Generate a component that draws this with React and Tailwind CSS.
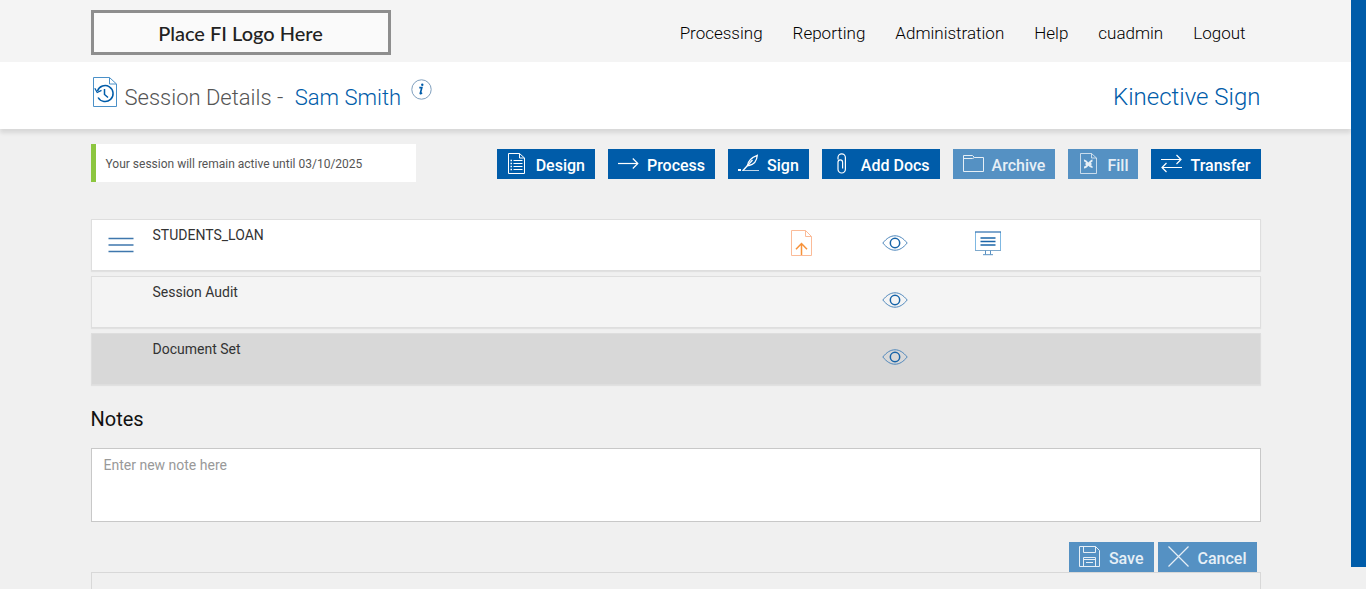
const iconProps = {
  fill: 'none',
  stroke: 'currentColor',
  'aria-hidden': true,
};

function HistoryDocIcon() {
  return (
    <svg width="24" height="30" viewBox="0 0 24 30" {...iconProps} className="shrink-0 text-[#4a90c8]">
      <path d="M.5.5h16l7 6.500v22.500H.5z" />
      <path d="M16.500.5V7h7" />
      <g stroke="#005ca9" strokeWidth="1.500">
        <path d="M4.500 14a8 8 0 1 1 .6 6.500" />
        <path d="M1.800 11.300l2.400 4.200 4.300-2.200" strokeWidth="1.300" />
        <path d="M11.500 12v5.500l3.500 3" />
      </g>
    </svg>
  );
}

function InfoIcon() {
  return (
    <svg width="21" height="21" viewBox="0 0 21 21" {...iconProps}>
      <circle cx="10.500" cy="10.500" r="9.700" stroke="#7f9fbd" />
      <path d="M8.300 8.700h2.500l-1.500 5.600c-.1.700.7.400 1.700-.6" stroke="#005ca9" strokeWidth="1.700" />
      <circle cx="11.300" cy="5.800" r="1.200" fill="#005ca9" stroke="none" />
    </svg>
  );
}

function DesignIcon() {
  return (
    <svg width="21" height="21" viewBox="0 0 21 21" {...iconProps}>
      <path d="M1.500.5h11l5 4.500v15.500h-16z" />
      <path d="M12.500.5V5h5" />
      <path d="M6.500 7.500h9M6.500 10.500h9M6.500 13.500h9M6.500 16.500h9" />
      <path d="M3.500 7.500H5M3.500 10.500H5M3.500 13.500H5M3.500 16.500H5" strokeWidth="1.600" />
    </svg>
  );
}

function ProcessIcon() {
  return (
    <svg width="21" height="21" viewBox="0 0 21 21" {...iconProps}>
      <path d="M0 10.500h20" strokeWidth="1.200" />
      <path d="M14.800 5.500l5 5-5 5" strokeWidth="1.200" />
    </svg>
  );
}

function SignIcon() {
  return (
    <svg width="21" height="21" viewBox="0 0 21 21" {...iconProps}>
      <path d="M4 17.500h17" strokeOpacity=".75" />
      <path d="M0 17h3" strokeWidth="2" />
      <path d="M9.500 12.500c.5-4.500 4-8 9.800-10.200-.5 6-3.800 9.400-8.300 10.200z" strokeWidth="1.300" />
      <path d="M5 17.500L14.500 7" strokeWidth="1.300" />
    </svg>
  );
}

function ClipIcon() {
  return (
    <svg width="21" height="21" viewBox="0 0 21 21" {...iconProps}>
      <path
        d="M6 6.500V4.500a3.700 3.700 0 0 1 7.400 0v11.800a3.700 3.700 0 0 1-7.400 0V9.200a2.300 2.300 0 0 1 4.600 0v6.300"
        strokeWidth="1.200"
      />
    </svg>
  );
}

function FolderIcon() {
  return (
    <svg width="21" height="21" viewBox="0 0 21 21" {...iconProps}>
      <path d="M.5 18.500v-16h9l2 2h9v14z" />
      <path d="M.5 5.500h9l2-1" />
    </svg>
  );
}

function FillIcon() {
  return (
    <svg width="21" height="21" viewBox="0 0 21 21" {...iconProps}>
      <path d="M2.500.5h11l5 4.500v15.500h-16z" strokeOpacity=".8" />
      <path d="M13.500.5V5h5" strokeOpacity=".8" />
      <path d="M6 7.500c3.500-.5 4.500 7 8.500 6.500M14.500 7.500c-3 0-4.500 7-8.500 7M7.500 11h6" strokeWidth="1.900" />
    </svg>
  );
}

function TransferIcon() {
  return (
    <svg width="21" height="21" viewBox="0 0 21 21" {...iconProps} strokeWidth="1.200">
      <path d="M0 6.500h20M15.500 2l4.500 4.500-4.500 4.500" />
      <path d="M21 14.500H1M5.500 10L1 14.500 5.500 19" />
    </svg>
  );
}

function SaveIcon() {
  return (
    <svg width="21" height="21" viewBox="0 0 21 21" {...iconProps}>
      <path d="M.5.5h16l4 4v16H.5z" />
      <path d="M4.500.5v6h12v-6" />
      <path d="M4.500 20.500v-9h12v9M4.500 13.500h12M7 16.500h7" />
    </svg>
  );
}

function CancelIcon() {
  return (
    <svg width="21" height="21" viewBox="0 0 21 21" {...iconProps} strokeWidth="1.200">
      <path d="M.5.500l20 20M20.500.500l-20 20" />
    </svg>
  );
}

function MenuIcon() {
  return (
    <svg width="26" height="16" viewBox="0 0 26 16" {...iconProps}>
      <path d="M.5 1.500h25M.5 8h25M.5 14.500h25" stroke="#3f77ad" strokeWidth="1.400" />
    </svg>
  );
}

function UploadIcon() {
  return (
    <svg width="22" height="26" viewBox="0 0 22 26" {...iconProps}>
      <path d="M.5.500h14l6 6v19H.5z" stroke="#fbbb98" />
      <path d="M14.500.5v6h6" stroke="#fbbb98" />
      <path d="M10.500 25V13.500M5 19.300l5.500-5.800 5.500 5.800" stroke="#f7923a" strokeWidth="1.500" />
    </svg>
  );
}

function EyeIcon() {
  return (
    <svg width="26" height="16" viewBox="0 0 26 16" {...iconProps}>
      <path
        d="M.8 8C4.800 3.200 8.500.8 13 .8S21.200 3.200 25.200 8c-4 4.800-7.700 7.200-12.200 7.200S4.800 12.800.8 8z"
        stroke="#4d86bb"
      />
      <circle cx="13" cy="8" r="4.700" stroke="#1663a8" strokeWidth="1.500" />
    </svg>
  );
}

function MonitorIcon() {
  return (
    <svg width="26" height="25" viewBox="0 0 26 25" {...iconProps}>
      <path d="M.5 19.500V1M25.500 1v18.500" stroke="#7fb8e2" />
      <path d="M0 1h26" stroke="#3a77b3" strokeWidth="1.300" />
      <path d="M0 19.500h26" stroke="#7fa9cc" />
      <path d="M5.500 7h15M5.500 10.500h15M5.500 14h15" stroke="#1b65a8" strokeWidth="1.400" />
      <path d="M10.500 19.500v4M15.500 19.500v4M8 23.700h10" stroke="#5b92c2" />
    </svg>
  );
}

const navItems = ['Processing', 'Reporting', 'Administration', 'Help', 'cuadmin', 'Logout'];

const actions = [
  { label: 'Design', Icon: DesignIcon },
  { label: 'Process', Icon: ProcessIcon },
  { label: 'Sign', Icon: SignIcon },
  { label: 'Add Docs', Icon: ClipIcon },
  { label: 'Archive', Icon: FolderIcon, disabled: true },
  { label: 'Fill', Icon: FillIcon, disabled: true },
  { label: 'Transfer', Icon: TransferIcon },
];

const documents = [
  { name: 'STUDENTS_LOAN', tone: 'bg-white', full: true },
  { name: 'Session Audit', tone: 'bg-[#f4f4f4]' },
  { name: 'Document Set', tone: 'bg-[#d8d8d8]' },
];

function ActionButton({ label, Icon, disabled, spacing = 'gap-2' }) {
  return (
    <button
      type="button"
      disabled={disabled}
      className={`flex h-[30px] items-start bg-[#005ca9] px-[10px] pt-1 text-base font-medium text-white disabled:bg-[#5591c3] disabled:text-[#e6eff6] ${spacing}`}
    >
      <Icon />
      <span className="pt-px leading-6">{label}</span>
    </button>
  );
}

function DocumentRow({ name, tone, full }) {
  return (
    <li
      className={`grid h-[52px] grid-cols-[58px_minmax(0,1fr)_93px_93px_93px_225px] items-center border border-[#dedede] shadow-[0_1px_1px_rgba(0,0,0,0.06)] ${tone}`}
    >
      <div className="flex justify-center">
        {full && (
          <button type="button" aria-label="Menu">
            <MenuIcon />
          </button>
        )}
      </div>
      <span className="self-start pt-[5px] pl-[3px] text-sm leading-5 text-[#333]">{name}</span>
      <div className="flex justify-center pb-1">
        {full && (
          <button type="button" aria-label="Upload">
            <UploadIcon />
          </button>
        )}
      </div>
      <div className="flex justify-center pb-1">
        <button type="button" aria-label="View">
          <EyeIcon />
        </button>
      </div>
      <div className="flex justify-center pb-1">
        {full && (
          <button type="button" aria-label="Display">
            <MonitorIcon />
          </button>
        )}
      </div>
    </li>
  );
}

export default function App() {
  return (
    <div className="flex min-h-screen bg-[#f0f0f0] font-['Roboto',sans-serif]">
      <div className="flex min-w-0 flex-1 flex-col">
        <header className="bg-[#f4f4f4]">
          <div className="mx-auto flex h-[62px] max-w-[1170px] items-center justify-between pt-[3px]">
            <div className="flex h-[45px] w-[300px] items-center justify-center border-3 border-[#8e8e8e] bg-[#fafafa] font-['Lato',sans-serif] text-xl font-medium text-[#222]">
              Place FI Logo Here
            </div>
            <nav className="flex gap-[30px] pr-[15px] text-[17px] leading-6 font-light text-black">
              {navItems.map((item) => (
                <a key={item} href="#">
                  {item}
                </a>
              ))}
            </nav>
          </div>
        </header>

        <div className="bg-white shadow-[0_4px_4px_rgba(0,0,0,0.1)]">
          <div className="mx-auto flex h-[67px] max-w-[1170px] items-center justify-between">
            <div className="flex items-center gap-2 pl-[2px]">
              <div className="pb-2">
                <HistoryDocIcon />
              </div>
              <h1 className="pt-1 text-[22px] font-light whitespace-pre text-[#555]">
                Session Details - <span className="pl-[6px] text-[#005ca9]">Sam Smith</span>
              </h1>
              <button type="button" aria-label="Session information" className="pb-3 pl-[2px]">
                <InfoIcon />
              </button>
            </div>
            <div className="pt-[3px] text-2xl font-light text-[#005ca9]">Kinective Sign</div>
          </div>
        </div>

        <main className="mx-auto flex w-full max-w-[1170px] flex-1 flex-col pt-[15px]">
          <div className="flex items-start justify-between">
            <p className="h-[38px] w-[325px] border-l-5 border-[#8cc63f] bg-white pl-[10px] text-xs leading-10 text-[#555]">
              Your session will remain active until 03/10/2025
            </p>
            <div className="flex gap-[13px] pt-[5px]">
              {actions.map((action) => (
                <ActionButton key={action.label} {...action} />
              ))}
            </div>
          </div>

          <ul className="mt-[37px] flex flex-col gap-[5px]">
            {documents.map((doc) => (
              <DocumentRow key={doc.name} {...doc} />
            ))}
          </ul>

          <label htmlFor="note" className="mt-5 text-xl leading-7 text-[#111]">
            Notes
          </label>
          <textarea
            id="note"
            placeholder="Enter new note here"
            className="mt-[15px] block h-[74px] w-full resize-none border border-[#c8c8c8] bg-white px-3 py-[6px] text-sm leading-5 text-[#333] placeholder:text-[#999]"
          />

          <div className="mt-5 flex justify-end gap-1 pr-1">
            <ActionButton label="Save" Icon={SaveIcon} spacing="gap-[9px]" disabled />
            <ActionButton label="Cancel" Icon={CancelIcon} spacing="gap-[9px]" disabled />
          </div>
          <div className="flex-1 border border-b-0 border-[#d8d8d8]" />
        </main>
      </div>
      <div className="h-[567px] w-[15px] shrink-0 bg-[#005ca9]" />
    </div>
  );
}
